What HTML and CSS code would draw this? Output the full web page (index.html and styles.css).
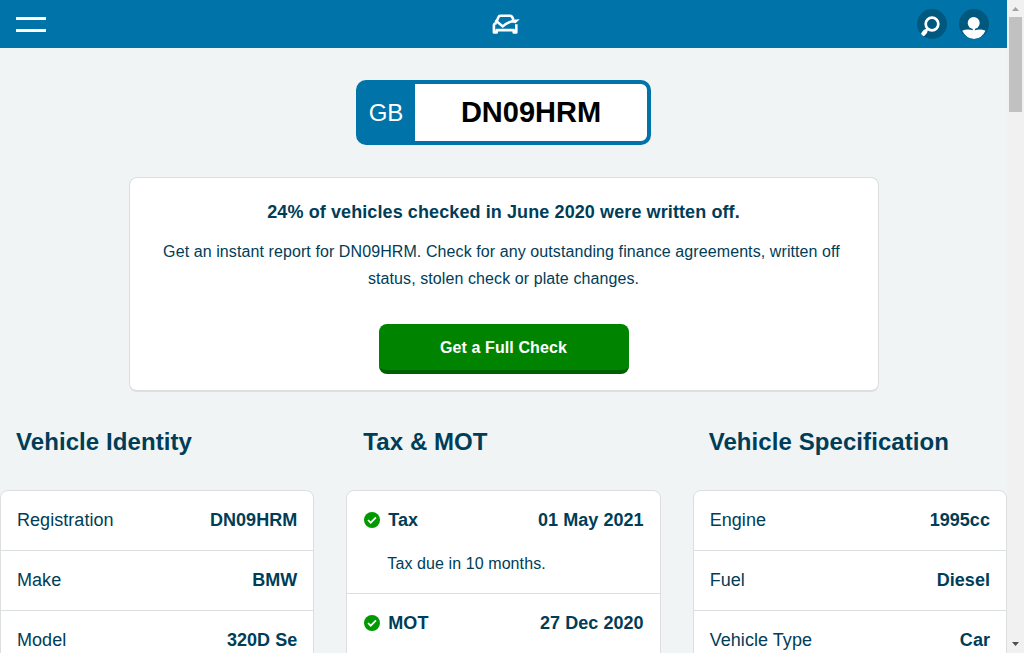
FILE: index.html
```html
<!DOCTYPE html>
<html lang="en">
<head>
<meta charset="utf-8">
<title>DN09HRM - Vehicle Check</title>
<link rel="stylesheet" href="styles.css">
</head>
<body>
<div class="page">
  <header class="topbar">
    <button class="menu" aria-label="Menu"><span class="menu-line"></span><span class="menu-line"></span></button>
    <svg class="logo" width="28" height="22" viewBox="0 0 28 22" fill="none" stroke="#fff">
      <path d="M4.600 7.500 6.500 3Q7 1.700 8.300 1.700h10q1.300 0 1.800 1.200l1.400 3" stroke-width="2.600"/>
      <path d="M4.800 9.200H3.800Q1.900 9.600 1.900 11.500v6.900h2.800v-2.300h17v2.300h2.600v-8.200" stroke-width="2.600" stroke-linejoin="round"/>
      <path d="M3.300 6.200 10.800 12.400Q15.500 8.400 21.500 6.700" stroke-width="2.500"/>
      <path d="M20 5.800 27.800 5.200 23.500 9.200 20 8.500z" fill="#fff" stroke="none"/>
    </svg>
    <nav class="actions">
      <a class="round" aria-label="Search"><svg width="30" height="30" viewBox="0 0 30 30" fill="none" stroke="#fff"><circle cx="15" cy="15" r="6.300" stroke-width="2.700"/><path d="M10.800 19.500 8.500 22.500" stroke-width="2.200"/><path d="M8.300 22.500 6.300 24.900" stroke-width="4.300" stroke-linecap="round"/></svg></a>
      <a class="round" aria-label="Account"><svg width="30" height="30" viewBox="0 0 30 30" fill="#fff"><circle cx="14.700" cy="13.900" r="6"/><path d="M13.700 18h2.200v3.200q5.500-1.700 10.600.6Q22.500 30 15 30T3.200 21.800Q8 19.500 13.700 21.200z"/></svg></a>
    </nav>
  </header>

  <main>
    <div class="plate"><span class="plate-country">GB</span><span class="plate-number"><span>DN09HRM</span></span></div>

    <section class="promo">
      <h3 class="promo-title">24% of vehicles checked in June 2020 were written off.</h3>
      <p class="promo-text"><span class="promo-line">Get an instant report for DN09HRM. Check for any outstanding finance agreements, written off</span><br>status, stolen check or plate changes.</p>
      <a class="cta">Get a Full Check</a>
    </section>

    <div class="columns">
      <section>
        <h2 class="heading">Vehicle Identity</h2>
        <div class="card">
          <div class="row"><span>Registration</span><b>DN09HRM</b></div>
          <div class="row"><span>Make</span><b>BMW</b></div>
          <div class="row"><span>Model</span><b>320D Se</b></div>
        </div>
      </section>
      <section>
        <h2 class="heading heading-tax">Tax &amp; MOT</h2>
        <div class="card">
          <div class="status">
            <div class="row"><b class="status-name"><svg width="16" height="16" viewBox="0 0 16 16"><circle cx="8" cy="8" r="8" fill="#090"/><path d="M4 8l2.700 2.700L12 5.400" fill="none" stroke="#fff" stroke-width="1.700"/></svg>Tax</b><b>01 May 2021</b></div>
            <p class="status-note">Tax due in 10 months.</p>
          </div>
          <div class="status">
            <div class="row"><b class="status-name"><svg width="16" height="16" viewBox="0 0 16 16"><circle cx="8" cy="8" r="8" fill="#090"/><path d="M4 8l2.700 2.700L12 5.400" fill="none" stroke="#fff" stroke-width="1.700"/></svg>MOT</b><b>27 Dec 2020</b></div>
          </div>
        </div>
      </section>
      <section>
        <h2 class="heading">Vehicle Specification</h2>
        <div class="card">
          <div class="row"><span>Engine</span><b>1995cc</b></div>
          <div class="row"><span>Fuel</span><b>Diesel</b></div>
          <div class="row"><span>Vehicle Type</span><b>Car</b></div>
        </div>
      </section>
    </div>
  </main>
</div>
<div class="scrollbar">
  <svg width="17" height="17" viewBox="0 0 17 17"><path d="M5 11 8.500 7 12 11z" fill="#a3a3a3"/></svg>
  <div class="thumb"></div>
  <svg class="down" width="17" height="17" viewBox="0 0 17 17"><path d="M5 6h7L8.500 10z" fill="#505050"/></svg>
</div>
</body>
</html>
```
FILE: styles.css
```css
* { box-sizing: border-box; }
body {
  margin: 0;
  height: 653px;
  overflow: hidden;
  display: flex;
  background: #f0f4f5;
  color: #003d57;
  font-family: "Liberation Sans", Arial, sans-serif;
}
h2, h3, p { margin: 0; }
svg { display: block; }
.page { width: 1007px; height: 653px; overflow: hidden; }
.topbar {
  height: 48px;
  padding: 0 18px 0 16px;
  display: grid;
  grid-template-columns: 1fr 28px 1fr;
  align-items: center;
  background: #0074a8;
}
.menu {
  width: 30px;
  padding: 0;
  border: 0;
  background: none;
  display: flex;
  flex-direction: column;
  gap: 9px;
}
.menu-line { height: 3px; width: 30px; background: #fff; }
.logo { margin: 1px 0 0 3px; }
.actions { display: flex; justify-content: flex-end; gap: 12px; }
.round { width: 30px; height: 30px; border-radius: 50%; background: #00587f; overflow: hidden; }
.plate {
  width: 295px;
  height: 65px;
  margin: 32px auto;
  border: 4px solid #0074a8;
  border-radius: 10px;
  background: #fff;
  display: flex;
}
.plate-country {
  width: 55px;
  padding-right: 3px;
  display: flex;
  align-items: center;
  justify-content: center;
  background: #0074a8;
  color: #fff;
  font-size: 24px;
}
.plate-number {
  flex: 1;
  padding-bottom: 1px;
  display: flex;
  align-items: center;
  justify-content: center;
  color: #000;
  font-size: 29px;
  font-weight: 700;
}
.promo {
  width: 750px;
  height: 215px;
  margin: 0 auto;
  padding-top: 20px;
  border: 1px solid #dcdfe0;
  border-bottom-width: 2px;
  border-radius: 8px;
  background: #fff;
  text-align: center;
}
.promo-title { font-size: 18px; line-height: 28px; letter-spacing: .1px; }
.promo-text { margin-top: 12px; font-size: 16px; line-height: 27px; letter-spacing: .09px; }
.promo-line { margin-right: 4px; }
.cta {
  display: block;
  width: 250px;
  height: 50px;
  margin: 32px auto 0;
  border-bottom: 4px solid #005f00;
  border-radius: 8px;
  background: #008400;
  color: #fff;
  font-size: 16px;
  font-weight: 700;
  line-height: 47px;
  letter-spacing: .1px;
}
.columns { display: grid; grid-template-columns: repeat(3, 1fr); gap: 32px; }
.heading {
  margin: 32px 16px 30px;
  font-size: 24px;
  line-height: 36px;
  letter-spacing: .08px;
}
.heading-tax { padding-left: 1px; }
.card {
  border: 1px solid #dcdfe0;
  border-radius: 8px;
  background: #fff;
  font-size: 18px;
  height: 240px;
  letter-spacing: .05px;
}
.row {
  height: 60px;
  padding: 0 16px;
  display: flex;
  align-items: center;
  justify-content: space-between;
  border-bottom: 1px solid #dcdfe0;
}
.status { border-bottom: 1px solid #dcdfe0; }
.status .row { border: 0; height: 59px; }
.status-name { display: flex; align-items: center; gap: 8px; padding-left: 1px; }
.status-name svg { margin-bottom: 1px; }
.status-note { padding: 0 16px 16px 40px; font-size: 16px; line-height: 27px; letter-spacing: .09px; }
.scrollbar { width: 17px; height: 653px; background: #f1f1f1; display: flex; flex-direction: column; }
.thumb { width: 13px; height: 95px; margin-left: 2px; background: #c1c1c1; }
.down { margin-top: auto; }
```
